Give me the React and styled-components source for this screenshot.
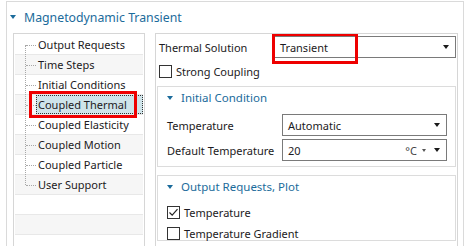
import React from "react";
import styled, { createGlobalStyle, css } from "styled-components";

const GlobalStyle = createGlobalStyle`
  html, body {
    margin: 0;
    padding: 0;
    background: #ffffff;
  }
  body {
    width: 464px;
    height: 246px;
    overflow: hidden;
    font-family: "Noto Sans", "Open Sans", sans-serif;
    font-size: 11px;
    color: #1c1a22;
  }
`;

const TEAL = "#1b6b9b";
const RED = "#ee0000";

// Styled components
const Frame = styled.div`
  box-sizing: border-box;
  margin: 1px 0 0 6px;
  width: 458px;
  height: 245px;
  border: 1px solid #dadada;
  border-bottom: none;
`;

const Header = styled.div`
  display: flex;
  align-items: center;
  height: 31px;
  padding-left: 3px;
  padding-bottom: 1px;
  box-sizing: border-box;
`;

const Caret = styled.span`
  width: 0;
  height: 0;
  border-left: 3px solid transparent;
  border-right: 3px solid transparent;
  border-top: 4px solid ${TEAL};
  margin-right: ${(p) => p.$gap || 8}px;
`;

const HeaderTitle = styled.span`
  color: ${TEAL};
  font-size: 12.3px;
`;

const Body = styled.div`
  display: flex;
  gap: 10px;
  padding-left: 6px;
  height: 213px;
`;

const TreePanel = styled.div`
  box-sizing: border-box;
  width: 132px;
  border: 1px solid #d6d6d6;
  border-bottom: none;
  padding: 1px 1px 0;
  overflow: hidden;
`;

const TreeRow = styled.div`
  position: relative;
  box-sizing: border-box;
  display: flex;
  align-items: stretch;
  height: 20px;
  padding-left: 10px;
  border-bottom: 1px solid #e8e8e8;
  background: ${(p) => (p.$odd ? "#f6f6f6" : "#ffffff")};
`;

const Connector = styled.span`
  position: relative;
  width: 11px;
  flex: none;

  &::before {
    content: "";
    position: absolute;
    left: 0;
    top: ${(p) => (p.$first ? "50%" : "-1px")};
    bottom: ${(p) => (p.$last ? "50%" : "-1px")};
    border-left: 1px dotted #a8a8a8;
  }

  &::after {
    content: "";
    position: absolute;
    left: 1px;
    right: 0;
    top: 50%;
    border-top: 1px dotted #a8a8a8;
  }
`;

const NodeLabel = styled.span`
  flex: 1;
  display: flex;
  align-items: center;
  padding-left: 2px;
  box-sizing: border-box;
  white-space: nowrap;
  ${(p) =>
    p.$selected &&
    css`
      background: #cfe4ea;
      outline: 1px dotted #333;
      outline-offset: -1px;
    `}
`;

const Highlight = styled.span`
  position: absolute;
  z-index: 5;
  box-sizing: border-box;
  border: 3px solid ${RED};
  pointer-events: none;
`;

const TreeHighlight = styled(Highlight)`
  left: 14px;
  top: -4px;
  width: 108px;
  height: 27px;
`;

const SelectHighlight = styled(Highlight)`
  left: -3px;
  top: -4px;
  width: 86px;
  height: 31px;
`;

const SettingsPanel = styled.div`
  box-sizing: border-box;
  width: 303px;
  border: 1px solid #d6d6d6;
  border-bottom: none;
  padding: 2px 0 0;
  overflow: hidden;
`;

const FieldRow = styled.div`
  display: flex;
  align-items: center;
  padding: 0 ${(p) => p.$right ?? 1}px 0 ${(p) => p.$left ?? 3}px;
  & + & {
    margin-top: 3px;
  }
`;

const FieldLabel = styled.span`
  width: 115px;
  flex: none;
  white-space: nowrap;
`;

const Select = styled.div`
  position: relative;
  flex: 1;
  box-sizing: border-box;
  height: 22px;
  display: flex;
  align-items: center;
  border: 1px solid #7a7a7a;
  background: #fff;
  padding: 0 6px 0 5px;
`;

const SelectValue = styled.span`
  flex: 1;
`;

const Arrow = styled.span`
  width: 0;
  height: 0;
  border-left: ${(p) => (p.$small ? 2.5 : 3.5)}px solid transparent;
  border-right: ${(p) => (p.$small ? 2.5 : 3.5)}px solid transparent;
  border-top: ${(p) => (p.$small ? 3 : 4)}px solid ${(p) => (p.$small ? "#555" : "#1a1a1a")};
  margin-left: ${(p) => p.$gap || 0}px;
`;

const Unit = styled.span`
  color: #444;
`;

const CheckRow = styled.label`
  display: flex;
  align-items: center;
  height: 13px;
  margin: ${(p) => p.$margin || "0"};
  padding-left: ${(p) => p.$indent ?? 3}px;
  gap: 4px;
`;

const Box = styled.span`
  box-sizing: border-box;
  width: 13px;
  height: 13px;
  border: 1px solid #333;
  background: #fff;
  display: flex;
  align-items: center;
  justify-content: center;
`;

const Section = styled.div`
  margin: ${(p) => p.$top}px 1px 0;
  border: 1px solid #dcdcdc;
  padding-bottom: ${(p) => p.$bottom || 0}px;
`;

const SectionHeader = styled.div`
  display: flex;
  align-items: center;
  height: 21px;
  padding-left: 9px;
  color: ${TEAL};
  font-size: 11.5px;
`;

const SectionBody = styled.div`
  padding-top: ${(p) => p.$top}px;
`;

function Checkbox({ checked }) {
  return (
    <Box>
      {checked && (
        <svg width="11" height="11" viewBox="0 0 11 11">
          <polyline points="1.5,5.5 4.2,8.2 9.5,2.2" fill="none" stroke="#222" strokeWidth="1.2" />
        </svg>
      )}
    </Box>
  );
}

const treeItems = [
  "Output Requests",
  "Time Steps",
  "Initial Conditions",
  "Coupled Thermal",
  "Coupled Elasticity",
  "Coupled Motion",
  "Coupled Particle",
  "User Support",
];

export default function App() {
  return (
    <>
      <GlobalStyle />
      <Frame>
        <Header>
          <Caret />
          <HeaderTitle>Magnetodynamic Transient</HeaderTitle>
        </Header>
        <Body>
          <TreePanel>
            {treeItems.map((item, i) => (
              <TreeRow key={item} $odd={i % 2 === 1}>
                <Connector $first={i === 0} $last={i === treeItems.length - 1} />
                <NodeLabel $selected={item === "Coupled Thermal"}>{item}</NodeLabel>
                {item === "Coupled Thermal" && <TreeHighlight />}
              </TreeRow>
            ))}
            <TreeRow />
            <TreeRow $odd />
            <TreeRow />
          </TreePanel>

          <SettingsPanel>
            <FieldRow>
              <FieldLabel>Thermal Solution</FieldLabel>
              <Select>
                <SelectValue>Transient</SelectValue>
                <Arrow />
                <SelectHighlight />
              </Select>
            </FieldRow>
            <CheckRow $margin="7px 0 0">
              <Checkbox />
              Strong Coupling
            </CheckRow>

            <Section $top={8} $bottom={5}>
              <SectionHeader>
                <Caret />
                Initial Condition
              </SectionHeader>
              <SectionBody $top={6}>
                <FieldRow $left={9} $right={8}>
                  <FieldLabel>Temperature</FieldLabel>
                  <Select>
                    <SelectValue>Automatic</SelectValue>
                    <Arrow />
                  </Select>
                </FieldRow>
                <FieldRow $left={9} $right={8}>
                  <FieldLabel>Default Temperature</FieldLabel>
                  <Select>
                    <SelectValue>20</SelectValue>
                    <Unit>°C</Unit>
                    <Arrow $small $gap={5} />
                    <Arrow $gap={8} />
                  </Select>
                </FieldRow>
              </SectionBody>
            </Section>

            <Section $top={8}>
              <SectionHeader>
                <Caret />
                Output Requests, Plot
              </SectionHeader>
              <SectionBody $top={9}>
                <CheckRow $indent={9}>
                  <Checkbox checked />
                  Temperature
                </CheckRow>
                <CheckRow $indent={9} $margin="8px 0 0">
                  <Checkbox />
                  Temperature Gradient
                </CheckRow>
              </SectionBody>
            </Section>
          </SettingsPanel>
        </Body>
      </Frame>
    </>
  );
}
